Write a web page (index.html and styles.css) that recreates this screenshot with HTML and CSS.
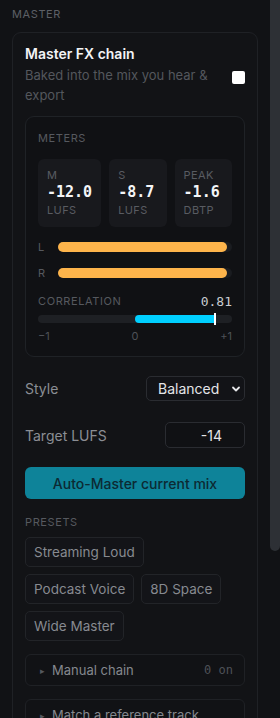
FILE: index.html
```html
<!DOCTYPE html>
<html lang="en">
<head>
<meta charset="utf-8">
<title>Master</title>
<link rel="stylesheet" href="styles.css">
</head>
<body>
<div class="frame">
<aside class="sidebar">
  <div class="section-label">MASTER</div>
  <section class="panel">
    <div class="fx-head">
      <div class="fx-text">
        <div class="fx-title">Master FX chain</div>
        <div class="fx-desc">Baked into the mix you hear &amp; export</div>
      </div>
      <input type="checkbox" class="fx-check">
    </div>

    <div class="meters">
      <div class="mini-label">METERS</div>
      <div class="cards">
        <div class="card"><div class="card-label">M</div><div class="card-value">-12.0</div><div class="card-unit">LUFS</div></div>
        <div class="card"><div class="card-label">S</div><div class="card-value">-8.7</div><div class="card-unit">LUFS</div></div>
        <div class="card"><div class="card-label">PEAK</div><div class="card-value">-1.6</div><div class="card-unit">DBTP</div></div>
      </div>
      <div class="ch-row"><span class="ch-label">L</span><div class="ch-track"><div class="ch-fill" style="width:97%"></div></div></div>
      <div class="ch-row"><span class="ch-label">R</span><div class="ch-track"><div class="ch-fill" style="width:97%"></div></div></div>
      <div class="corr-head"><span class="mini-label">CORRELATION</span><span class="corr-val">0.81</span></div>
      <div class="corr-track">
        <div class="corr-fill" style="width:40.5%"></div>
        <div class="corr-mark" style="left:90.5%"></div>
      </div>
      <div class="corr-ticks"><span>−1</span><span>0</span><span>+1</span></div>
    </div>

    <div class="field-row style-row">
      <label class="field-label">Style</label>
      <div class="select"><span>Balanced</span>
        <svg width="10" height="10" viewBox="0 0 10 10"><path d="M2 3.5 5 6.5 8 3.5" fill="none" stroke="#e6e7ea" stroke-width="1.8" stroke-linecap="round" stroke-linejoin="round"/></svg>
      </div>
    </div>
    <div class="field-row target-row">
      <label class="field-label">Target LUFS</label>
      <div class="num-input">-14</div>
    </div>
    <button class="primary">Auto-Master current mix</button>

    <div class="mini-label presets-label">PRESETS</div>
    <div class="chips">
      <button class="chip">Streaming Loud</button>
      <button class="chip">Podcast Voice</button>
      <button class="chip">8D Space</button>
      <button class="chip">Wide Master</button>
    </div>

    <div class="collapse"><span class="tri">▸</span><span class="col-title">Manual chain</span><span class="col-meta">0 on</span></div>
    <div class="collapse"><span class="tri">▸</span><span class="col-title">Match a reference track</span></div>
  </section>
</aside>
<div class="scroll-rail"><div class="scroll-thumb"></div></div>
</div>
</body>
</html>
```
FILE: styles.css
```css
* { box-sizing: border-box; }
html, body { margin: 0; padding: 0; background: #111215; }
body { font-family: Inter, "Noto Sans", sans-serif; color: #e6e7ea; }

.frame {
  display: flex;
  height: 100vh;
  overflow: hidden;
}
.sidebar {
  flex: 1;
  min-width: 0;
  overflow: hidden;
  padding: 7px 12px 20px 12px;
  background: #111215;
}
.scroll-rail {
  width: 10px;
  flex: none;
  background: #111215;
}
.scroll-thumb {
  height: 551px;
  background: #2d3035;
  border-radius: 0 0 5px 5px;
}

.section-label {
  font-size: 11px;
  line-height: 14px;
  letter-spacing: 0.6px;
  color: #5d6066;
  margin-bottom: 11px;
}

.panel {
  border: 1px solid #1f2125;
  border-radius: 9px;
  padding: 12px 12px 12px 12px;
  background: #121316;
}

.fx-head { display: flex; align-items: center; gap: 12px; }
.fx-text { flex: 1; }
.fx-title { font-size: 14px; font-weight: 600; line-height: 18px; color: #f3f4f6; }
.fx-desc { font-size: 13px; line-height: 20px; color: #54575d; margin-top: 2px; }
.fx-check {
  appearance: none;
  width: 13px; height: 13px;
  margin: 0;
  background: #ffffff;
  border-radius: 2px;
  flex: none;
  margin-top: 4px;
}

.meters {
  margin-top: 11px;
  border: 1px solid #1f2226;
  border-radius: 9px;
  padding: 13px 12px 13px 12px;
  background: #101114;
}
.mini-label {
  font-size: 11px;
  line-height: 16px;
  letter-spacing: 0.6px;
  color: #56595f;
}
.cards {
  display: grid;
  grid-template-columns: repeat(3, 1fr);
  gap: 8px;
  margin-top: 13px;
}
.card {
  background: #18191d;
  border-radius: 6px;
  padding: 9px 9px 9px 9px;
}
.card-label, .card-unit { font-size: 11px; line-height: 14px; color: #595c62; letter-spacing: 0.4px; }
.card-unit { line-height: 16px; }
.card-value {
  font-family: "DejaVu Sans Mono", monospace;
  font-weight: 700;
  font-size: 15px;
  line-height: 20px;
  color: #f4f5f7;
}

.ch-row { display: flex; align-items: center; gap: 8px; height: 10px; margin-top: 15px; }
.ch-row + .ch-row { margin-top: 16px; }
.ch-label { width: 12px; font-size: 11px; color: #56595f; }
.ch-track { flex: 1; height: 10px; border-radius: 5px; background: #1a1c20; }
.ch-fill { height: 100%; border-radius: 5px; background: #fdb44b; }

.corr-head {
  display: flex; justify-content: space-between; align-items: center;
  margin-top: 15px;
}
.corr-val { font-family: "DejaVu Sans Mono", monospace; font-size: 13px; color: #c9ccd1; }
.corr-track {
  position: relative;
  height: 8px;
  border-radius: 4px;
  background: #1e2024;
  margin-top: 6px;
}
.corr-fill {
  position: absolute;
  left: 50%; top: 0; bottom: 0;
  background: #00cfff;
  border-radius: 4px 0 0 4px;
}
.corr-mark {
  position: absolute;
  top: -2px; bottom: -2px;
  width: 2px;
  background: #ffffff;
}
.corr-ticks {
  display: flex; justify-content: space-between;
  font-size: 11px; line-height: 14px; color: #4e5157;
  margin-top: 6px;
}

.field-row { display: flex; align-items: center; justify-content: space-between; }
.style-row { margin-top: 19px; }
.target-row { margin-top: 21px; }
.field-label { font-size: 14px; color: #8b8e94; }
.select {
  width: 99px; height: 25px;
  border: 1px solid #2a2c31;
  border-radius: 5px;
  background: #121317;
  display: flex; align-items: center; justify-content: space-between;
  padding: 0 3px 0 11px;
  font-size: 14px; color: #e4e5e8;
}
.num-input {
  width: 80px; height: 26px;
  border: 1px solid #2a2c31;
  border-radius: 5px;
  background: #101114;
  display: flex; align-items: center; justify-content: flex-end;
  padding-right: 22px;
  font-size: 14px; color: #e4e5e8;
}
.primary {
  display: block;
  width: 100%;
  height: 32px;
  margin-top: 19px;
  border: 0;
  border-radius: 6px;
  background: #0e8399;
  color: #0c2a33;
  font-family: Inter, sans-serif;
  font-size: 14px;
  font-weight: 500;
}

.presets-label { margin-top: 15px; }
.chips { display: flex; flex-wrap: wrap; gap: 7px; margin-top: 7px; }
.chip {
  height: 30px;
  padding: 0 8px;
  border: 1px solid #222428;
  border-radius: 5px;
  background: #131418;
  color: #878a90;
  font-family: Inter, sans-serif;
  font-size: 13.5px;
}

.collapse {
  display: flex; align-items: center;
  height: 32px;
  margin-top: 13px;
  border: 1px solid #1f2125;
  border-radius: 6px;
  padding: 0 11px 0 14px;
  background: #111215;
}
.tri { font-size: 9px; color: #55585e; width: 12px; }
.col-title { flex: 1; font-size: 13px; color: #85888e; }
.col-meta { font-family: "DejaVu Sans Mono", monospace; font-size: 12px; color: #4e5157; }
```
